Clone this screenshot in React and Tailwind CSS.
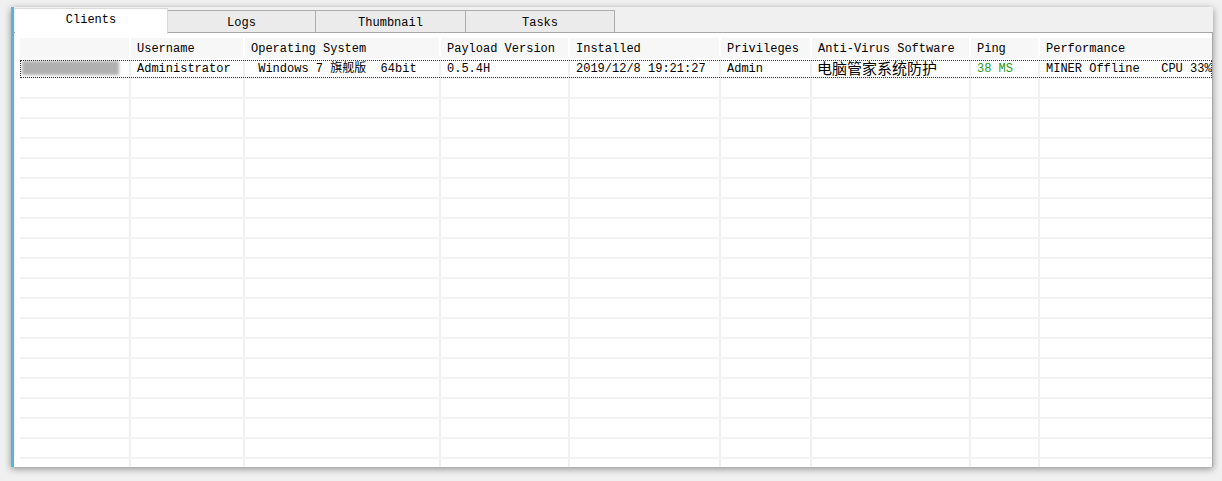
import React from "react";

const colW = [
  "w-[111px]",
  "w-[114px]",
  "w-[196px]",
  "w-[129px]",
  "w-[151px]",
  "w-[91px]",
  "w-[159px]",
  "w-[69px]",
  "w-[180px]",
];
const headers = ["", "Username", "Operating System", "Payload Version", "Installed", "Privileges", "Anti-Virus Software", "Ping", "Performance"];
const cells = [
  null,
  "Administrator",
  " Windows 7 旗舰版  64bit",
  "0.5.4H",
  "2019/12/8 19:21:27",
  "Admin",
  "电脑管家系统防护",
  "38 MS",
  "MINER Offline   CPU 33%",
];

function Tab({ label, active, w }) {
  if (active) {
    return (
      <div className={`${w} h-[26px] mt-[1px] -mb-[1px] bg-white border-t border-r border-[#d9d9d9] flex items-center justify-center text-[12px] text-black relative z-10`}>
        <span className="-mt-[3px]">{label}</span>
      </div>
    );
  }
  return (
    <div className={`${w} h-[23px] mt-[3px] -ml-[1px] bg-[#ebebeb] border border-b-0 border-[#acacac] flex items-center justify-center text-[12px] text-black`}>
      <span className="mt-[2px]">{label}</span>
    </div>
  );
}

export default function App() {
  const emptyRows = Array.from({ length: 21 });
  return (
    <div className="w-[1222px] h-[481px] bg-[#f0f0f0] overflow-hidden pt-[7px] pl-[11px] font-['Liberation_Mono','Noto_Sans_CJK_SC',monospace]">
      <div className="w-[1202px] h-[460px] flex shadow-[0_2px_7px_rgba(0,0,0,0.4)] bg-[#f0f0f0]">
        <div className="w-[3px] h-full bg-[#56b4e3]" />
        <div className="flex-1 flex flex-col min-w-0">
          <div className="h-[25px] flex pl-[1px] items-start">
            <Tab label="Clients" active w="w-[153px]" />
            <Tab label="Logs" w="w-[149px]" />
            <Tab label="Thumbnail" w="w-[151px]" />
            <Tab label="Tasks" w="w-[150px]" />
          </div>
          <div className="flex-1 bg-white border-t border-r border-[#a8a8a8] pl-[6px] pt-[5px] overflow-hidden">
            <div className="h-full overflow-hidden">
              <div className="flex h-[21px]">
                {headers.map((h, i) => (
                  <div
                    key={i}
                    className={`${colW[i]} shrink-0 h-full bg-[#f7f7f7] border-r-2 border-b border-white flex items-center pl-[6px] pt-[1px] text-[12px] text-black whitespace-pre overflow-hidden`}
                  >
                    {h}
                  </div>
                ))}
              </div>
              <div className="relative flex h-[20px] border-b-2 border-[#f3f3f3]">
                <div className="absolute inset-x-0 top-[1px] bottom-[-1px] border border-dotted border-[#333] pointer-events-none z-10" />
                {cells.map((c, i) => {
                  if (i === 0) {
                    return (
                      <div key={i} className={`${colW[i]} shrink-0 h-full border-r-2 border-[#f0f0f0] flex items-center pl-[2px]`}>
                        <div className="w-[97px] h-[14px] bg-[#b0b0b0] blur-[1.5px]" />
                      </div>
                    );
                  }
                  if (i === 6) {
                    return (
                      <div key={i} className={`${colW[i]} shrink-0 h-full border-r-2 border-[#f0f0f0] flex items-center pl-[5px] text-[15px] text-black whitespace-pre font-['Noto_Sans_CJK_SC',sans-serif]`}>
                        {c}
                      </div>
                    );
                  }
                  return (
                    <div
                      key={i}
                      className={`${colW[i]} shrink-0 h-full ${i < 8 ? "border-r-2 border-[#f0f0f0]" : ""} flex items-center pl-[6px] pt-[2px] text-[12px] ${i === 7 ? "text-[#1f9a1f]" : "text-black"} whitespace-pre overflow-hidden`}
                    >
                      {c}
                    </div>
                  );
                })}
              </div>
              {emptyRows.map((_, r) => (
                <div key={r} className="flex h-[20px] border-b-2 border-[#f3f3f3]">
                  {colW.map((w, i) => (
                    <div key={i} className={`${w} shrink-0 h-full border-r-2 border-[#f0f0f0]`} />
                  ))}
                </div>
              ))}
            </div>
          </div>
        </div>
      </div>
    </div>
  );
}
